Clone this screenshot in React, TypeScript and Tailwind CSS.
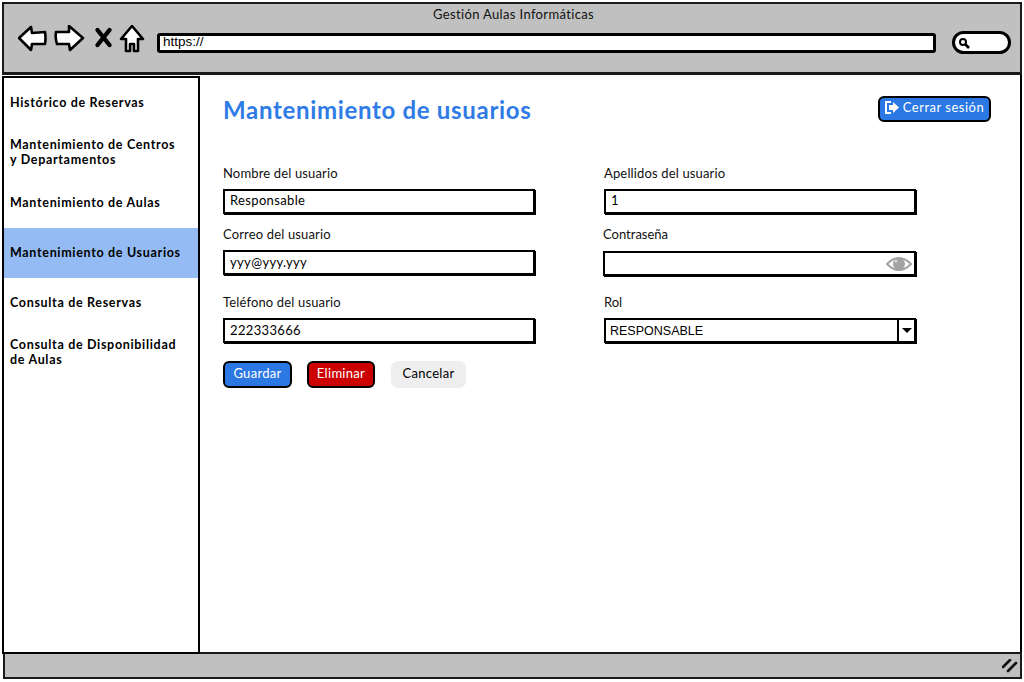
import React from 'react';

const menu = [
  { label: 'Histórico de Reservas' },
  { label: 'Mantenimiento de Centros y Departamentos' },
  { label: 'Mantenimiento de Aulas' },
  { label: 'Mantenimiento de Usuarios', active: true },
  { label: 'Consulta de Reservas' },
  { label: 'Consulta de Disponibilidad de Aulas' },
];

function NavIcons() {
  return (
    <svg width="128" height="30" viewBox="0 0 128 30" className="shrink-0" fill="#fff" stroke="#000" strokeWidth="2.6" strokeLinejoin="round">
      <path d="M1 13 L13 2 L14 8 L27 7 Q28 13 27 19 L14 19 L13 25 Z" />
      <path d="M38 7 L51 7 L51 1 L65 13 L52 25 L51 19 L39 19 Q37 13 38 7 Z" />
      <path d="M79.5 5 L91.5 20 M91.5 5 L79.5 20" fill="none" strokeWidth="4.4" strokeLinecap="round" />
      <path d="M114 1 L125 14 L120 14 L120 26 L116 26 L116 19 L112 19 L112 26 L108 26 L108 14 L103 14 Z" />
    </svg>
  );
}

function Field({ label, value, className, low }: { label: string; value?: string; className?: string; low?: boolean }) {
  return (
    <div className={className}>
      <div className="h-[16px] text-[13px] leading-[16px] tracking-[0.15px] text-[#111]">{label}</div>
      <div className={`mt-[8px] h-[25px] border-2 border-black pl-[5px] text-[13px] tracking-[0.35px] shadow-[1px_1px_0_#000] ${low ? 'leading-[20px]' : 'leading-[18px]'}`}>{value}</div>
    </div>
  );
}

export default function App() {
  return (
    <div className="flex h-[682px] w-[1024px] flex-col overflow-hidden bg-white font-['Lato',sans-serif] text-black">
      {/* Browser bar */}
      <header className="mx-[2px] mt-[2px] h-[73px] shrink-0 border-2 border-b-[3px] border-[#1a1a1a] bg-[#c0c0c0] pl-[14px] pr-[9px]">
        <div className="h-[20px] pr-[2px] text-center text-[13px] leading-[20px] tracking-[0.35px] text-[#111]">Gestión Aulas Informáticas</div>
        <div className="mt-[1px] flex items-start">
          <NavIcons />
          <div className="ml-[11px] mt-[8px] h-[20px] w-[779px] shrink-0 rounded-[3px] border-[3px] border-black bg-white pl-[3px] font-['Liberation_Sans',sans-serif] text-[13.5px] leading-[12px]">https://</div>
          <div className="ml-[16px] mt-[6px] flex h-[23px] w-[59px] shrink-0 items-center rounded-full border-[3px] border-black bg-white pl-[3px]">
            <svg width="12" height="12" viewBox="0 0 12 12" fill="none" stroke="#000">
              <circle cx="5" cy="5" r="3" strokeWidth="2" />
              <path d="M7.5 7.5 L11 11" strokeWidth="2.6" />
            </svg>
          </div>
        </div>
      </header>

      <div className="flex min-h-0 flex-1">
        {/* Sidebar */}
        <nav className="relative z-10 ml-[2px] mt-[1px] w-[198px] shrink-0 border-2 border-black bg-white">
          {menu.map(item => (
            <div
              key={item.label}
              className={`flex h-[50px] items-center px-[6px] pb-[2px] text-[12.5px] font-bold leading-[15px] tracking-[0.68px] ${item.active ? 'bg-[#94bbf3]' : ''}`}
            >
              <span className="w-[172px]">{item.label}</span>
            </div>
          ))}
        </nav>

        {/* Content */}
        <main className="mr-[2px] flex-1 border-r-2 border-black pl-[23px] pr-[29px] pt-[21px]">
          <div className="flex items-start justify-between">
            <h1 className="-mt-[1px] text-[24px] font-bold leading-[30px] tracking-[0.68px] text-[#2f7be6]">Mantenimiento de usuarios</h1>
            <button className="flex h-[26px] w-[113px] items-center justify-center gap-[3px] rounded-[6px] border-2 border-black bg-[#2b78e4] pb-[3px] text-[13px] leading-none tracking-[0.5px] text-white">
              <svg width="15" height="13" viewBox="0 0 15 13" fill="#fff">
                <path d="M6 1 H1 V12 H6" fill="none" stroke="#fff" strokeWidth="2" />
                <path d="M4 4 H8 V1 L14 6.5 L8 12 V9 H4 Z" />
              </svg>
              Cerrar sesión
            </button>
          </div>

          <div className="mt-[40px] grid w-[693px] grid-cols-[312px_312px] gap-x-[69px]">
            <Field label="Nombre del usuario" value="Responsable" />
            <Field label="Apellidos del usuario" value="1" />
            <Field label="Correo del usuario" value="yyy@yyy.yyy" className="mt-[12px]" low />
            <div className="-ml-[1px] mt-[12px]">
              <div className="h-[16px] text-[13px] leading-[16px] text-[#111]">Contraseña</div>
              <div className="mt-[9px] flex h-[25px] items-center justify-end border-2 border-black pr-[2px] shadow-[1px_1px_0_#000]">
                <svg width="26" height="18" viewBox="0 0 26 18">
                  <path d="M1 9 Q13 -3 25 9 Q13 21 1 9 Z" fill="none" stroke="#a3a3a3" strokeWidth="2" />
                  <circle cx="13" cy="9" r="6" fill="#a3a3a3" />
                  <circle cx="10" cy="6" r="1.5" fill="#d6d6d6" />
                </svg>
              </div>
            </div>
            <Field label="Teléfono del usuario" value="222333666" className="mt-[18px]" low />
            <div className="mt-[18px]">
              <div className="h-[16px] text-[13px] leading-[16px] text-[#111]">Rol</div>
              <div className="mt-[8px] flex h-[25px] border-2 border-black shadow-[1px_1px_0_#000]">
                <div className="flex-1 pl-[4px] font-['Liberation_Sans',sans-serif] text-[12.5px] leading-[22px]">RESPONSABLE</div>
                <div className="flex w-[17px] items-center justify-center border-l-2 border-black">
                  <div className="h-0 w-0 border-x-[5px] border-t-[5px] border-x-transparent border-t-black" />
                </div>
              </div>
            </div>
          </div>

          <div className="mt-[18px] flex items-start text-[13px] tracking-[0.3px]">
            <button className="h-[27px] w-[69px] rounded-[6px] border-2 border-black bg-[#2b78e4] pb-[2px] text-white">Guardar</button>
            <button className="ml-[15px] h-[27px] w-[68px] rounded-[6px] border-2 border-black bg-[#cc0000] pb-[2px] text-white">Eliminar</button>
            <button className="ml-[16px] h-[27px] w-[75px] rounded-[7px] bg-[#eeeeee] pb-[2px]">Cancelar</button>
          </div>
        </main>
      </div>

      {/* Status bar */}
      <footer className="-mt-[2px] mb-[3px] ml-[3px] mr-[2px] flex h-[27px] shrink-0 items-center justify-end border-2 border-[#1a1a1a] bg-[#c0c0c0] pr-[2px]">
        <svg width="16" height="14" viewBox="0 0 16 14" stroke="#111" strokeWidth="2.6" strokeLinecap="round">
          <path d="M1 8 L8 1 M6 12 L14 4" />
        </svg>
      </footer>
    </div>
  );
}
